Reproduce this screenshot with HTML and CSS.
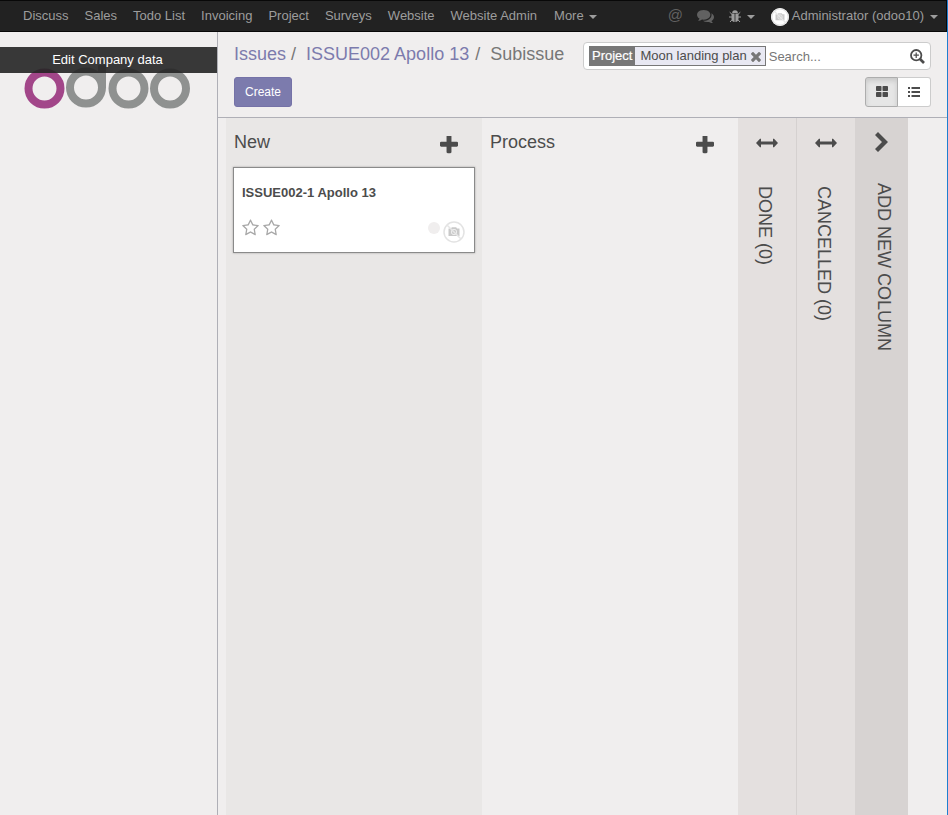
FILE: index.html
```html
<!DOCTYPE html>
<html lang="en">
<head>
<meta charset="utf-8">
<title>Subissue - Odoo</title>
<link rel="stylesheet" href="styles.css">
</head>
<body>
<svg class="defs" width="0" height="0">
  <symbol id="plus" viewBox="192 192 1408 1408"><path d="M1600 736v192q0 40-28 68t-68 28h-416v416q0 40-28 68t-68 28h-192q-40 0-68-28t-28-68v-416h-416q-40 0-68-28t-28-68v-192q0-40 28-68t68-28h416v-416q0-40 28-68t68-28h192q40 0 68 28t28 68v416h416q40 0 68 28t28 68z"/></symbol>
  <symbol id="star" viewBox="64 0 1664 1792"><path d="M1201 1004l306-297-422-62-189-382-189 382-422 62 306 297-73 421 378-199 377 199zm527-357q0 22-26 48l-363 354 86 500q1 7 1 20 0 50-41 50-19 0-40-12l-449-236-449 236q-22 12-40 12-21 0-31.500-14.500t-10.500-35.500q0-6 2-20l86-500-364-354q-25-27-25-48 0-37 56-46l502-73 225-455q19-41 49-41t49 41l225 455 502 73q56 9 56 46z"/></symbol>
  <symbol id="arrows" viewBox="0 0 22 10"><path d="M0 5l4-4.200h1v2.700h12v-2.700h1l4 4.200-4 4.200h-1v-2.700h-12v2.700h-1z"/></symbol>
  <symbol id="camera" viewBox="0 0 22 22"><circle cx="11" cy="11" r="10" fill="none" stroke="#e3e3e3" stroke-width="1.500"/><path d="M5.500 7.500h2.500l.8-1.200h4.400l.8 1.200h2.500v7.500h-11z" fill="#c9c9c9"/><circle cx="11" cy="11" r="2.700" fill="#ccc" stroke="#eee"/><path d="M4 4l14 14" stroke="#e6e6e6" stroke-width="1.500"/></symbol>
</svg>
<nav class="navbar">
  <ul class="menu">
    <li>Discuss</li><li>Sales</li><li>Todo List</li><li>Invoicing</li><li>Project</li><li>Surveys</li><li>Website</li><li>Website Admin</li><li>More <i class="caret"></i></li>
  </ul>
  <div class="systray">
    <span class="at">@</span>
    <svg class="chat" viewBox="0 192 1792 1408"><path d="M1408 768q0 139-94 257t-256.500 186.500-353.500 68.500q-86 0-176-16-124 88-278 128-36 9-86 16h-3q-11 0-20.500-8t-11.500-21q-1-3-1-6.500t.5-6.500 2-6l2.500-5 3.500-5.500 4-5 4.500-5 4-4.500q5-6 23-25t26-29.500 22.500-29 25-38.500 20.500-44q-124-72-195-177t-71-224q0-139 94-257t256.500-186.500 353.500-68.500 353.500 68.500 256.500 186.500 94 257zm384 256q0 120-71 224.500t-195 176.500q10 24 20.500 44t25 38.500 22.500 29 26 29.500 23 25q1 1 4 4.500t4.500 5 4 5 3.500 5.500l2.500 5 2 6 .5 6.500-1 6.500q-3 14-13 22t-22 7q-50-7-86-16-154-40-278-128-90 16-176 16-271 0-472-132 58 4 88 4 161 0 309-45t264-129q125-92 192-212t67-254q0-77-23-152 129 71 204 178t75 230z"/></svg>
    <svg class="bug" viewBox="0 0 12 13"><path d="M3.200 3a2.800 2.800 0 0 1 5.600 0z"/><path d="M2.500 3.600h3.100v8.400q-3.100-.3-3.100-3.600zM6.400 3.600h3.100v4.800q0 3.300-3.100 3.600z"/><path class="legs" d="M.7 2.200l2.300 2.200M11.300 2.200l-2.300 2.200M0 7h3M12 7h-3M1 12l2.300-2.500M11 12l-2.300-2.500"/></svg>
    <i class="caret"></i>
    <span class="avatar"><svg viewBox="0 0 22 22"><use href="#camera"/></svg></span>
    <span class="user">Administrator (odoo10)</span>
    <i class="caret"></i>
  </div>
</nav>
<div class="main">
  <aside class="sidebar">
    <svg class="logo" viewBox="0 0 168 44"><g fill="none" stroke="#8f9190" stroke-width="8"><circle cx="20.500" cy="23.500" r="16" stroke="#a24689"/><circle cx="62" cy="22.500" r="16"/><path d="M78 0v23"/><circle cx="104.500" cy="23.500" r="16"/><circle cx="146" cy="23.500" r="16"/></g></svg>
    <div class="edit">Edit Company data</div>
  </aside>
  <section class="content">
    <header class="panel">
      <div class="row">
        <ol class="crumbs"><li><a>Issues</a></li><li><a>ISSUE002 Apollo 13</a></li><li>Subissue</li></ol>
        <div class="search">
          <div class="facet"><span class="label">Project</span><span class="value">Moon landing plan</span><svg class="remove" viewBox="302 238 1188 1316"><path d="M1490 1322q0 40-28 68l-136 136q-28 28-68 28t-68-28l-294-294-294 294q-28 28-68 28t-68-28l-136-136q-28-28-28-68t28-68l294-294-294-294q-28-28-28-68t28-68l136-136q28-28 68-28t68 28l294 294 294-294q28-28 68-28t68 28l136 136q28 28 28 68t-28 68l-294 294 294 294q28 28 28 68z" transform="translate(0 -132)"/></svg></div>
          <span class="placeholder">Search...</span>
          <svg class="mag" viewBox="0 0 15 15"><circle cx="6.200" cy="6.200" r="5.200" stroke-width="1.800"/><path d="M10 10l4 4" stroke-width="2.600"/><path d="M3.500 6.200h5.400M6.200 3.500v5.400" stroke-width="1.200"/></svg>
        </div>
      </div>
      <div class="row second">
        <button class="create">Create</button>
        <div class="switch">
          <button class="active"><svg viewBox="0 0 12 11" width="12" height="11"><rect width="5.500" height="5" rx=".8"/><rect x="6.500" width="5.500" height="5" rx=".8"/><rect y="6" width="5.500" height="5" rx=".8"/><rect x="6.500" y="6" width="5.500" height="5" rx=".8"/></svg></button>
          <button><svg viewBox="0 0 12 10" width="12" height="10"><path d="M0 0h2v2H0zM0 4h2v2H0zM0 8h2v2H0zM3.500 0h8.500v2h-8.500zM3.500 4h8.500v2h-8.500zM3.500 8h8.500v2h-8.500z"/></svg></button>
        </div>
      </div>
    </header>
    <div class="kanban">
      <div class="group new">
        <div class="head"><span>New</span><svg class="plus"><use href="#plus"/></svg></div>
        <article class="card">
          <strong>ISSUE002-1 Apollo 13</strong>
          <div class="foot"><svg class="star"><use href="#star"/></svg><svg class="star"><use href="#star"/></svg><i class="dot"></i><svg class="assignee"><use href="#camera"/></svg></div>
        </article>
      </div>
      <div class="group">
        <div class="head"><span>Process</span><svg class="plus"><use href="#plus"/></svg></div>
      </div>
      <div class="folded"><svg class="arrows"><use href="#arrows"/></svg><span>DONE (0)</span></div>
      <div class="folded second-fold"><svg class="arrows"><use href="#arrows"/></svg><span>CANCELLED (0)</span></div>
      <div class="folded add"><svg class="chevron" viewBox="0 0 13 20"><path d="M0 3l3-3 10 10-10 10-3-3 7-7z"/></svg><span>ADD NEW COLUMN</span></div>
    </div>
  </section>
</div>
</body>
</html>
```
FILE: styles.css
```css
* { box-sizing: border-box; }
html, body { height: 100%; }
body {
  margin: 0;
  display: flex;
  flex-direction: column;
  overflow: hidden;
  border-right: 1px solid #1e7fd0;
  background: #f0eeee;
  color: #4c4c4c;
  font: 13px/18px "Liberation Sans", Arial, sans-serif;
}
svg { display: block; fill: currentColor; flex: none; }
.defs { position: absolute; }
ul, ol { list-style: none; margin: 0; padding: 0; display: flex; }
button { font: inherit; margin: 0; padding: 0; }
.navbar {
  height: 32px;
  flex: none;
  display: flex;
  justify-content: space-between;
  background: #222;
  border: 1px solid #080808;
  border-left: 0;
  color: #9d9d9d;
  line-height: 30px;
}
.menu { padding-left: 15px; white-space: nowrap; }
.menu li { padding: 0 8px; }
.menu li:last-child { padding-left: 9px; }
.caret {
  display: inline-block;
  border: 4px solid transparent;
  border-top-color: currentColor;
  border-bottom: 0;
  vertical-align: middle;
  margin-left: 2px;
}
.systray { display: flex; align-items: center; padding-right: 8px; white-space: nowrap; }
.at { color: #616161; font-size: 15px; line-height: 26px; height: 28px; width: 16px; }
.chat { width: 17px; height: 14px; margin-left: 13px; color: #616161; }
.bug { width: 12px; height: 13px; margin-left: 15px; }
.legs { fill: none; stroke: currentColor; }
.bug + .caret { margin: 2px 16px 0 6px; }
.avatar { width: 18px; height: 18px; border-radius: 50%; background: #fff; margin-top: 2px; }
.avatar svg { width: 18px; height: 18px; }
.user { margin: 0 6px 0 3px; }
.user + .caret { margin: 2px 0 0; }

.main { flex: 1; display: flex; min-height: 0; }
.sidebar { width: 218px; flex: none; border-right: 1px solid #afafb6; position: relative; padding: 33px 0 0 24px; }
.logo { width: 168px; height: 44px; }
.edit {
  position: absolute;
  left: 0;
  right: 0;
  top: 15px;
  height: 26px;
  padding-right: 2px;
  line-height: 25px;
  text-align: center;
  color: #fff;
  background: rgba(37, 37, 37, .91);
}
.content { flex: 1; display: flex; flex-direction: column; min-width: 0; }
.panel { height: 86px; flex: none; border-bottom: 1px solid #afafb6; padding: 10px 16px 0; }
.row { display: flex; justify-content: space-between; }
.crumbs { font-size: 18px; line-height: 24px; color: #777; white-space: nowrap; }
.crumbs a { color: #7c7bad; }
.crumbs li + li::before { content: "/\a0"; padding: 0 5px; }
.crumbs li:last-child { padding-left: 1px; }
.search {
  width: 348px;
  height: 28px;
  display: flex;
  align-items: center;
  padding: 0 5px;
  background: #fff;
  border: 1px solid #ccc;
  border-radius: 4px;
}
.facet { height: 20px; display: flex; align-items: center; border: 1px solid #777; background: #e8e8f2; white-space: nowrap; }
.label { background: #777; color: #fff; padding: 0 3px 0 2px; -webkit-text-stroke: .2px #fff; }
.value { padding: 0 4px 0 5px; }
.remove { width: 10px; height: 11px; margin: 3px 4px 0 0; color: #777; }
.placeholder { flex: 1; padding: 1px 0 0 3px; color: #777; }
.mag { width: 15px; height: 15px; margin-top: 1px; fill: none; stroke: currentColor; }
.second { margin-top: 7px; }
.create { width: 58px; height: 30px; border: 1px solid #7572a7; border-radius: 3px; background: #7c7bad; color: #fff; font-size: 12px; }
.switch { display: flex; }
.switch button { width: 33px; height: 30px; display: grid; place-items: center; background: #fff; border: 1px solid #ccc; border-left: 0; border-radius: 0 3px 3px 0; color: #4c4c4c; }
.switch .active { background: #e6e6e6; border: 1px solid #adadad; border-radius: 3px 0 0 3px; box-shadow: inset 0 3px 5px rgba(0, 0, 0, .125); }
.switch svg { margin-bottom: 1px; }

.kanban { flex: 1; display: flex; padding-left: 8px; font-size: 18px; }
.group { width: 256px; padding: 0 7px; }
.new { background: #e9e7e6; }
.head { height: 49px; display: flex; justify-content: space-between; padding: 12px 17px 0 1px; line-height: 24px; }
.plus { width: 18px; height: 18px; margin-top: 6px; }
.card { height: 86px; background: #fff; border: 1px solid #8a8a8a; padding: 16px 9px 0 8px; font-size: 13px; box-shadow: 0 0 2px rgba(0, 0, 0, .3); }
.card strong { display: block; }
.foot { display: flex; margin-top: 17px; }
.star { width: 17px; height: 18px; margin-right: 4px; color: #a8a8a8; }
.dot { width: 12px; height: 12px; margin: 3px 3px 0 auto; border-radius: 50%; background: #f0eeee; }
.assignee { width: 22px; height: 22px; margin-top: 2px; }
.folded { width: 58px; display: flex; flex-direction: column; align-items: center; background: #e4e0df; }
.folded span { writing-mode: vertical-rl; white-space: nowrap; line-height: 24px; margin: 38px 4px 0 0; }
.second-fold { width: 59px; border-left: 1px solid #d5d1d0; }
.arrows { width: 22px; height: 10px; margin-top: 20px; }
.add { width: 53px; background: #d7d3d2; }
.chevron { width: 13px; height: 20px; margin-top: 14px; }
.folded.add span { margin: 31px 0 0 4px; }
```
